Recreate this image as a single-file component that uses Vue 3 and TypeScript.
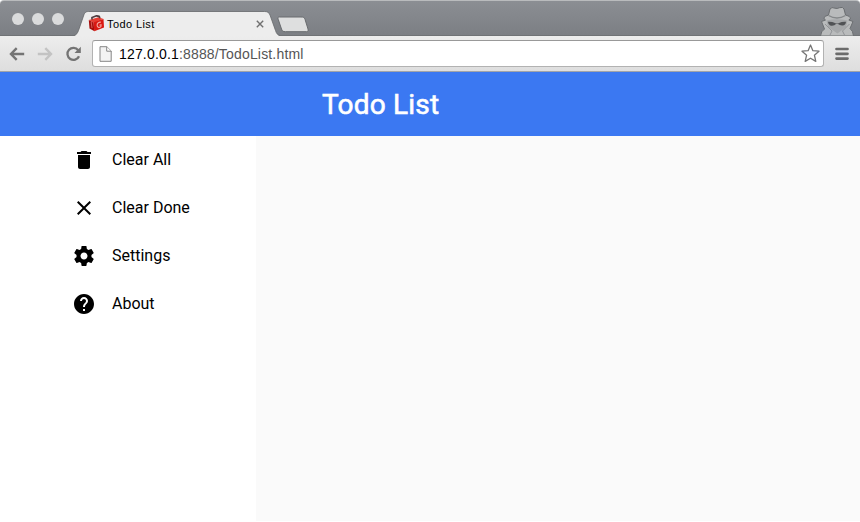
<script setup lang="ts">
interface MenuItem {
  label: string
  path: string
}

const windowButtons: number[] = [1, 2, 3]

const menu: MenuItem[] = [
  { label: 'Clear All', path: 'M6 19c0 1.1.9 2 2 2h8c1.1 0 2-.9 2-2V7H6v12zM19 4h-3.5l-1-1h-5l-1 1H5v2h14V4z' },
  { label: 'Clear Done', path: 'M19 6.41L17.59 5 12 10.59 6.41 5 5 6.41 10.59 12 5 17.59 6.41 19 12 13.41 17.59 19 19 17.59 13.41 12z' },
  { label: 'Settings', path: 'M19.43 12.98c.04-.32.07-.64.07-.98s-.03-.66-.07-.98l2.11-1.65c.19-.15.24-.42.12-.64l-2-3.46c-.12-.22-.39-.3-.61-.22l-2.49 1c-.52-.4-1.08-.73-1.69-.98l-.38-2.65C14.46 2.18 14.25 2 14 2h-4c-.25 0-.46.18-.49.42l-.38 2.65c-.61.25-1.17.59-1.69.98l-2.49-1c-.23-.09-.49 0-.61.22l-2 3.46c-.13.22-.07.49.12.64l2.11 1.65c-.04.32-.07.65-.07.98s.03.66.07.98l-2.11 1.65c-.19.15-.24.42-.12.64l2 3.46c.12.22.39.3.61.22l2.49-1c.52.4 1.08.73 1.69.98l.38 2.65c.03.24.24.42.49.42h4c.25 0 .46-.18.49-.42l.38-2.65c.61-.25 1.17-.59 1.69-.98l2.49 1c.23.09.49 0 .61-.22l2-3.46c.12-.22.07-.49-.12-.64l-2.11-1.65zM12 15.500c-1.930 0-3.500-1.570-3.500-3.500s1.570-3.500 3.500-3.500 3.500 1.570 3.500 3.500-1.570 3.500-3.500 3.500z' },
  { label: 'About', path: 'M12 2C6.48 2 2 6.48 2 12s4.48 10 10 10 10-4.48 10-10S17.52 2 12 2zm1 17h-2v-2h2v2zm2.07-7.75l-.9.92C13.45 12.9 13 13.5 13 15h-2v-.5c0-1.1.45-2.1 1.17-2.83l1.24-1.26c.37-.36.59-.86.59-1.41 0-1.1-.9-2-2-2s-2 .9-2 2H8c0-2.21 1.79-4 4-4s4 1.79 4 4c0 .88-.36 1.68-.93 2.25z' },
]
</script>

<template>
  <div class="window">
    <div class="titlebar">
      <div class="lights">
        <span v-for="n in windowButtons" :key="n" class="light"></span>
      </div>
      <div class="tab">
        <svg class="tab-shape" width="206" height="25" viewBox="0 0 206 25">
          <path d="M0 25C2.500 24 3.500 22 4.500 19.500L9.500 5C10.500 1.500 12 .5 14.500 .5H190.500C193.500 .5 195 1.500 196 4L201.500 19.500C202.500 22.500 203.500 24 206 25Z" fill="#ededed" />
          <path d="M0 24.500C2.500 24 3.500 22 4.500 19.500L9.500 5C10.500 1.500 12 .5 14.500 .5H190.500C193.500 .5 195 1.500 196 4L201.500 19.500C202.500 22.500 203.500 24 206 24.500" fill="none" stroke="#64676a" stroke-width=".8" />
        </svg>
        <svg class="favicon" width="17" height="17" viewBox="0 0 17 17">
          <path d="M.8 5L5.500 7.500 6.500 16.300 1.500 13.500Z" fill="#a50e0b" />
          <path d="M5.300 6.500L15.500 4 16 12.500 6.300 16.300Z" fill="#d91912" />
          <path d="M.8 5L10.500 2.200 15.500 4 5.300 7.500Z" fill="#e63c31" />
          <path d="M4 4.500V2.500L8.500 .8 11 1.300 12 3" fill="none" stroke="#503c40" stroke-width="1.700" />
          <path d="M3.200 7L4 13" stroke="#e87569" stroke-width=".8" />
          <path d="M13 7.300C11 6.600 9 8.300 9.100 10.300 9.200 12.700 11.500 13 13 11.300V9.800L11.500 10.200" fill="none" stroke="#f4aaa0" stroke-width="1.100" />
        </svg>
        <span class="tab-title">Todo List</span>
        <svg class="close" width="8" height="8" viewBox="0 0 8 8">
          <path d="M.8.8L7.200 7.200M7.200.8L.8 7.200" stroke="#707070" stroke-width="1.400" />
        </svg>
      </div>
      <svg class="new-tab" width="32" height="17" viewBox="0 0 32 17">
        <path d="M2.500 1H24C26.500 1 27.500 1.600 28 3.300L31 13C31.400 14.700 31 15.700 29.500 15.700H8.500C6 15.700 5.200 15 4.500 13L1.200 3.300C.7 1.600 1 1 2.500 1Z" fill="#dedfdf" stroke="#686b6e" />
      </svg>
      <svg class="incognito" width="36" height="30" viewBox="0 0 36 30">
        <path d="M11 3Q12.500 .6 16 2.200 18 3 20.500 1.700 24 .5 25 3L26.500 9Q31 10 31.500 12 31.500 13.300 29.800 14L34 15.500 31 22.500Q34 24.500 34.500 30H1.500Q2 25 5.500 23L2.500 15.500 6.500 14Q4.500 13 5 11.700 6 10 9.500 9Z" fill="#b9bbbc" stroke="#6b6e71" stroke-width="1" />
        <path d="M9.500 9.500Q18 14.500 26.500 9.500" fill="none" stroke="#85888a" stroke-width="1.300" />
        <path d="M7.500 14.500Q18 12 28.500 14.500L27 21 18.500 27.500 9 21Z" fill="#a5a7a9" />
        <path d="M9 15.800Q13 15.500 16 17 18 18 20 17 23 15.500 27 15.800 26.500 20 23 19.500 20.500 19.300 19 18H17Q15.500 20 12.500 19.800 9.500 19.500 9 15.800Z" fill="#505255" />
        <path d="M6 18L13 25 10.500 30M30.500 18L23.500 25 26 30" fill="none" stroke="#919396" />
      </svg>
    </div>

    <div class="toolbar">
      <svg class="nav" width="16" height="14" viewBox="0 0 16 14">
        <path d="M7.700 1.200L2 7 7.700 12.800M2 7H15.200" fill="none" stroke="#747474" stroke-width="2.400" />
      </svg>
      <svg class="nav" width="16" height="14" viewBox="0 0 16 14">
        <path d="M8.300 1.200L14 7 8.300 12.800M14 7H.8" fill="none" stroke="#c3c3c3" stroke-width="2.400" />
      </svg>
      <svg class="nav reload" width="17" height="16" viewBox="0 0 17 16">
        <path d="M13.200 4.200A6 6 0 1 0 14 10.200" fill="none" stroke="#747474" stroke-width="2.300" />
        <path d="M15.800.7V7H9.500Z" fill="#747474" />
      </svg>
      <div class="address">
        <svg class="page-icon" width="13" height="16" viewBox="0 0 13 16">
          <path d="M1 .7H7.800L12.200 5V15.300H1Z" fill="#f3f3f3" stroke="#858585" />
          <path d="M7.700.7V5.200H12.200" fill="#fff" stroke="#858585" />
        </svg>
        <span class="url"><span class="host">127.0.0.1</span>:8888/TodoList.html</span>
        <svg class="star" width="19" height="19" viewBox="0 0 19 19">
          <path d="M9.500 1L11.900 6.700 18 7.200 13.400 11.200 14.800 17.400 9.500 14.200 4.200 17.400 5.600 11.200 1 7.200 7.100 6.700Z" fill="#fff" stroke="#757575" stroke-width="1.300" stroke-linejoin="round" />
        </svg>
      </div>
      <svg class="more" width="14" height="14" viewBox="0 0 14 14">
        <path d="M1.500 2H12.500M1.500 6.800H12.500M1.500 11.600H12.500" stroke="#6b6b6b" stroke-width="2.700" stroke-linecap="round" />
      </svg>
    </div>

    <header class="app-bar"><h1>Todo List</h1></header>

    <div class="body">
      <nav class="drawer">
        <a v-for="item in menu" :key="item.label" class="item">
          <svg width="24" height="24" viewBox="0 0 24 24"><path :d="item.path" /></svg>
          <span>{{ item.label }}</span>
        </a>
      </nav>
      <main class="content"></main>
    </div>
  </div>
</template>

<style>
body {
  margin: 0;
  overflow: hidden;
}
</style>

<style scoped>
.window {
  box-sizing: border-box;
  width: 860px;
  height: 522px;
  display: flex;
  flex-direction: column;
  background: #fff;
  overflow: hidden;
}
svg {
  display: block;
  flex: none;
}
.titlebar {
  box-sizing: border-box;
  height: 36px;
  flex: none;
  display: flex;
  align-items: flex-end;
  background: linear-gradient(#8b8e93, #7c7f84);
  border-top: 1px solid #b9bbbd;
  border-bottom: 1px solid #707376;
  border-radius: 4px 4px 0 0;
}
.lights {
  display: flex;
  gap: 8px;
  padding: 0 0 10px 12px;
  width: 62px;
}
.light {
  width: 12px;
  height: 12px;
  border-radius: 50%;
  background: #dadbdc;
}
.tab {
  position: relative;
  width: 206px;
  height: 25px;
  display: flex;
  align-items: center;
  margin-bottom: -1px;
}
.tab-shape {
  position: absolute;
  left: 0;
  top: 0;
}
.favicon {
  position: relative;
  margin-left: 14px;
}
.tab-title {
  position: relative;
  margin-left: 2px;
  font: 11px/14px "Liberation Sans", sans-serif;
  letter-spacing: 0.4px;
  color: #000;
  width: 149px;
}
.close {
  position: relative;
}
.new-tab {
  margin: 0 0 2px -3px;
}
.incognito {
  margin: 0 5px -1px auto;
}
.toolbar {
  box-sizing: border-box;
  height: 36px;
  flex: none;
  display: flex;
  align-items: center;
  padding: 0 11px 0 9px;
  background: linear-gradient(#ededed, #dedede);
  border-bottom: 1px solid #a2a4a8;
}
.nav {
  margin-right: 12px;
}
.reload {
  margin-right: 10px;
}
.address {
  box-sizing: border-box;
  width: 732px;
  height: 27px;
  display: flex;
  align-items: center;
  padding: 0 3px 0 6px;
  border: 1px solid #b2b2b2;
  border-top-color: #999;
  border-radius: 3px;
  background: #fff;
}
.url {
  margin-left: 7px;
  font: 14px/18px "Liberation Sans", sans-serif;
  letter-spacing: 0.17px;
  color: #555;
}
.host {
  color: #000;
}
.star {
  margin-left: auto;
}
.more {
  margin-left: auto;
}
.app-bar {
  box-sizing: border-box;
  height: 64px;
  flex: none;
  display: flex;
  align-items: center;
  padding: 2px 0 0 322px;
  background: #3b78f2;
}
h1 {
  margin: 0;
  font: 400 28px/32px Roboto, sans-serif;
  letter-spacing: 0.2px;
  color: #fff;
  -webkit-text-stroke: 0.6px #fff;
}
.body {
  flex: 1;
  display: flex;
}
.drawer {
  width: 256px;
  background: #fff;
}
.item {
  height: 48px;
  display: flex;
  align-items: center;
  gap: 16px;
  padding-left: 72px;
  font: 16px/24px Roboto, sans-serif;
  color: #000;
}
.content {
  flex: 1;
  background: #fafafa;
  margin-bottom: 1px;
}
</style>
